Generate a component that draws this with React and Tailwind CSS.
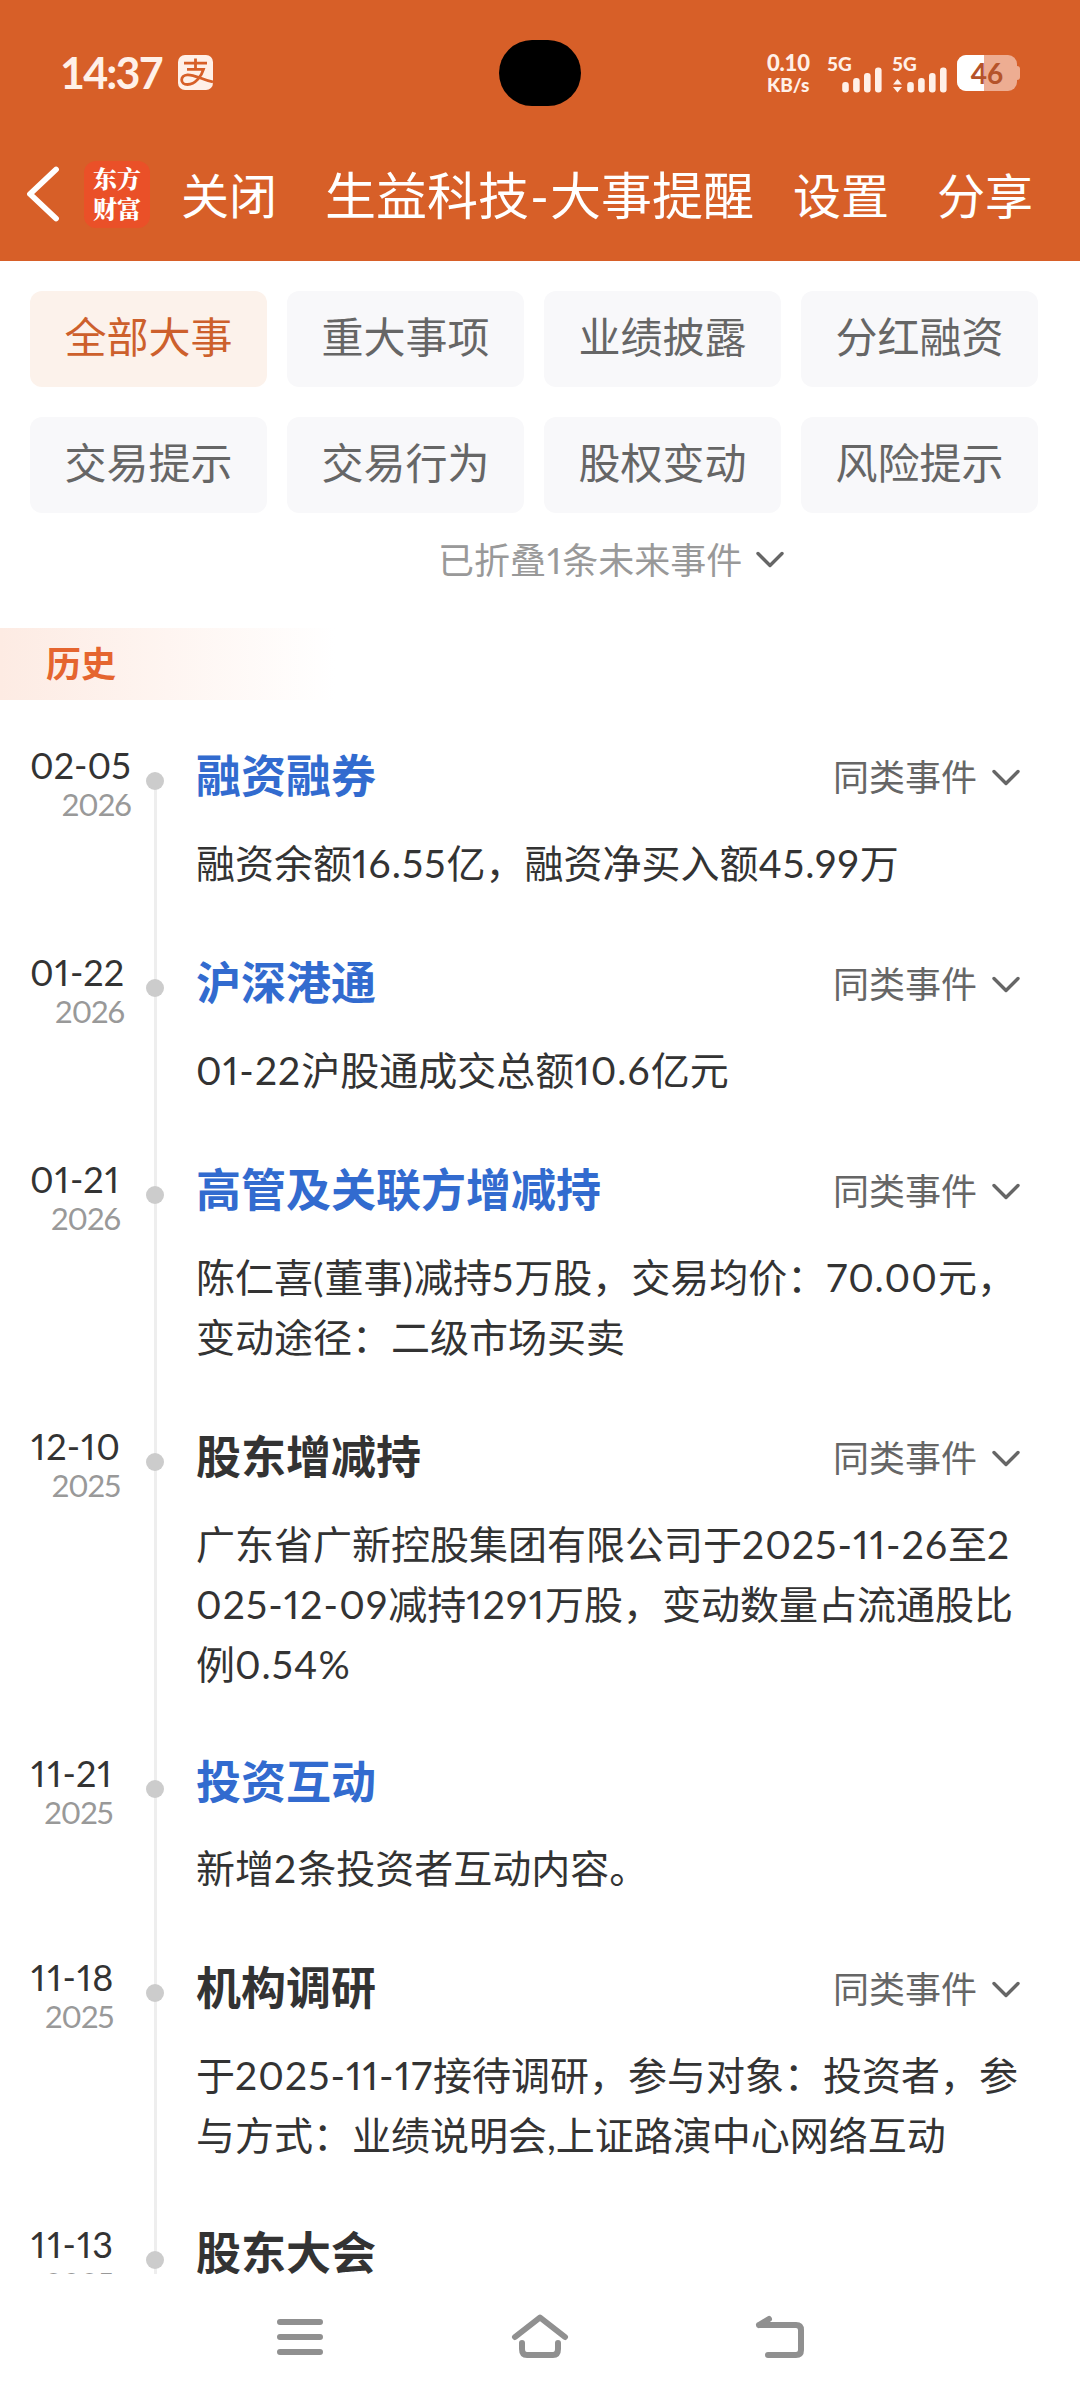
const FONT = "font-['Lato','Noto_Sans_CJK_SC',sans-serif]";

const FILTERS = ["全部大事", "重大事项", "业绩披露", "分红融资", "交易提示", "交易行为", "股权变动", "风险提示"];

const EVENTS = [
  { date: "02-05", year: "2026", title: "融资融券", link: true, more: true, lines: ["融资余额16.55亿，融资净买入额45.99万"] },
  { date: "01-22", year: "2026", title: "沪深港通", link: true, more: true, lines: ["01-22沪股通成交总额10.6亿元"] },
  { date: "01-21", year: "2026", title: "高管及关联方增减持", link: true, more: true, lines: ["陈仁喜(董事)减持5万股，交易均价：70.00元，", "变动途径：二级市场买卖"] },
  { date: "12-10", year: "2025", title: "股东增减持", more: true, lines: ["广东省广新控股集团有限公司于2025-11-26至2", "025-12-09减持1291万股，变动数量占流通股比", "例0.54%"] },
  { date: "11-21", year: "2025", title: "投资互动", link: true, lines: ["新增2条投资者互动内容。"] },
  { date: "11-18", year: "2025", title: "机构调研", more: true, lines: ["于2025-11-17接待调研，参与对象：投资者，参", "与方式：业绩说明会,上证路演中心网络互动"] },
  { date: "11-13", year: "2025", title: "股东大会", lines: [] },
];

// Spaces runs of digits slightly wider than the surrounding Chinese text.
function Mixed({ text }) {
  return text.split(/([0-9.()%-]+)/).map((part, i) =>
    i % 2 ? (
      <span key={i} className="tracking-[1.1px]">{part}</span>
    ) : (
      part
    )
  );
}

function Chevron() {
  return (
    <svg width="28" height="18" viewBox="0 0 28 18" fill="none" stroke="#666" strokeWidth="3.4" strokeLinecap="round" strokeLinejoin="round">
      <path d="M2 2.500 14 14.500 26 2.500" />
    </svg>
  );
}

function Signal({ data }) {
  return (
    <div className="relative h-[36px] w-[56px]">
      <span className="absolute left-[-1px] top-[2px] text-[19px] leading-[13px] font-black">5G</span>
      <svg className="absolute left-0 top-0" width="56" height="38" viewBox="0 0 56 38" fill="#fff0e8">
        {data && <path d="M4.500 24 9 29.500H0zM4.500 37.500 0 32h9z" />}
        <rect x="14.2" y="27" width="6.6" height="10.5" rx="3" />
        <rect x="25.1" y="23" width="6.6" height="14.5" rx="3" />
        <rect x="36" y="18" width="6.6" height="19.5" rx="3" />
        <rect x="47" y="12.5" width="6.6" height="25" rx="3" />
      </svg>
    </div>
  );
}

function StatusBar() {
  return (
    <div className="relative flex h-[145px] items-center pl-[60px] text-[#fff0e8]">
      <span className="w-[118px] text-[43px] leading-none font-bold tracking-[-1.8px]">14:37</span>
      <svg width="35" height="35" viewBox="0 0 35 35">
        <rect width="35" height="35" rx="7" fill="#fff0e8" />
        <g fill="none" stroke="#d75f28" strokeWidth="2.8">
          <path d="M17.5 3.5V15M6 8.2H29M9 14.3H25.5C23.5 21 17.5 29.5 9.5 29.5 2 29.5 1.500 20.500 9.500 19.800 17 19.500 23 24.500 35 27" />
        </g>
      </svg>
      <div className="absolute left-[499px] top-[40px] h-[66px] w-[82px] rounded-full bg-black" />
      <div className="absolute left-[767px] top-[55px] flex">
        <div className="w-[61px] text-[20px] leading-[22px] font-black">
          <div className="-mt-[3px] tracking-[-0.2px] text-[22px]">0.10</div>
          <div className="text-[19px] leading-[22px]">KB/s</div>
        </div>
        <Signal />
        <div className="w-[9px]" />
        <Signal data />
        <div className="relative ml-[8px] h-[36px] w-[60px] overflow-hidden rounded-[9px] bg-[#edad92]">
          <div className="h-full w-[27px] bg-white" />
          <span className="absolute inset-0 flex items-center justify-center text-[28px] leading-none font-bold text-[#b5532a]">46</span>
        </div>
        <div className="mt-[11px] h-[14px] w-[3px] rounded-r-[3px] bg-[#edad92]" />
      </div>
    </div>
  );
}

function NavBar() {
  return (
    <div className="flex h-[116px] items-center pb-[18px] text-[48px] leading-[72px] whitespace-nowrap text-white">
      <svg className="ml-[26px] w-[34px]" height="56" viewBox="0 0 34 56" fill="none" stroke="#fff" strokeWidth="5.8" strokeLinecap="round" strokeLinejoin="round">
        <path d="M30 3.500 4 28 30 52.500" />
      </svg>
      <div className="ml-[24px] h-[67px] w-[66px] rounded-[12px] bg-[#ea5028] pt-[2px] text-center font-['Noto_Serif_CJK_SC','Noto_Sans_CJK_SC',serif] text-[24px] leading-[30px] font-black">
        <div>东方</div>
        <div>财富</div>
      </div>
      <span className="ml-[31px] mt-[3px]">关闭</span>
      <span className="ml-[48px] mt-[3px] w-[429px] text-[51px]">
        生益科技<span className="ml-[1px] tracking-[1px]">-</span>大事提醒
      </span>
      <span className="ml-[39px] mt-[3px]">设置</span>
      <span className="ml-[48px] mt-[3px]">分享</span>
    </div>
  );
}

function EventRow({ event }) {
  return (
    <div className="flex">
      <div className="-mt-[1px] w-[124px] shrink-0 pl-[30px]">
        <div className="inline-flex flex-col items-end whitespace-nowrap proportional-nums">
          <span className="text-[36px] leading-[43px] text-[#333]">
            {event.date.split("").map((c, i) => (
              <span key={i} className={c === "1" ? "ml-[1px] mr-[1px]" : ""}>{c}</span>
            ))}
          </span>
          <span className="text-[31px] leading-[35px] tracking-[-1px] text-[#999]">{event.year}</span>
        </div>
      </div>
      <div className="relative ml-[22px] w-[18px] shrink-0">
        <div className="absolute left-[8px] top-[36px] h-full w-[3px] bg-[#eee]" />
        <div className="relative mt-[27px] size-[18px] rounded-full bg-[#ccc]" />
      </div>
      <div className="ml-[32px] flex-1 pt-[1px] pb-[59px]">
        <div className={event.more ? "flex h-[60px] items-center justify-between pr-[60px]" : "flex h-[57px] items-center"}>
          <h2 className={event.link ? "text-[45px] leading-[57px] font-bold text-[#326bcf]" : "text-[45px] leading-[57px] font-bold text-[#333]"}>{event.title}</h2>
          {event.more && (
            <div className="flex items-center gap-[15px] pt-[3px] text-[36px] leading-[57px] text-[#666]">
              同类事件
              <Chevron />
            </div>
          )}
        </div>
        <div className="pt-[27px] text-[39px] leading-[60px] whitespace-nowrap text-[#333] proportional-nums">
          {event.lines.map((l) => (
            <div key={l}>
              <Mixed text={l} />
            </div>
          ))}
        </div>
      </div>
    </div>
  );
}

export default function App() {
  return (
    <div className={`flex h-[2400px] w-[1080px] flex-col overflow-hidden bg-white ${FONT}`}>
      <header className="h-[261px] shrink-0 bg-[#d75f28]">
        <StatusBar />
        <NavBar />
      </header>
      <main className="h-[2013px] shrink-0 overflow-hidden">
        <div className="grid grid-cols-[repeat(4,237px)] gap-x-[20px] gap-y-[30px] px-[30px] pt-[30px]">
          {FILTERS.map((f, i) => (
            <div key={f} className={i === 0 ? "h-[96px] rounded-[12px] bg-[#fcf2eb] text-center text-[42px] leading-[92px] text-[#cd602c]" : "h-[96px] rounded-[12px] bg-[#f8f8fa] text-center text-[42px] leading-[92px] text-[#666]"}>
              {f}
            </div>
          ))}
        </div>
        <div className="mt-[17px] flex h-[60px] items-center gap-[14px] pl-[438px] text-[36px] leading-[60px] text-[#999] proportional-nums">
          <span>
            已折叠<span className="mx-[1px]">1</span>条未来事件
          </span>
          <Chevron />
        </div>
        <div className="mt-[38px] h-[72px] w-[335px] bg-linear-to-r from-[#fdebe3] to-white pl-[46px] text-[35px] leading-[71px] font-bold text-[#e5652f]">历史</div>
        <div className="pt-[45px]">
          {EVENTS.map((e) => (
            <EventRow key={e.date} event={e} />
          ))}
        </div>
      </main>
      <footer className="flex flex-1 items-start justify-center pt-[38px]">
        <svg width="540" height="56" viewBox="270 2312 540 56" fill="none" stroke="#909090" strokeWidth="6" strokeLinecap="round" strokeLinejoin="round">
          <path d="M280 2322H320M280 2337H320M280 2352H320" />
          <path d="M515 2337 540 2317.500 565 2337M522 2343V2349Q522 2355 527 2355H553Q558 2355 558 2349V2343" />
          <path d="M759 2325H796Q801 2325 801 2330V2350Q801 2355 796 2355H768M759 2325 769 2319" />
        </svg>
      </footer>
    </div>
  );
}
